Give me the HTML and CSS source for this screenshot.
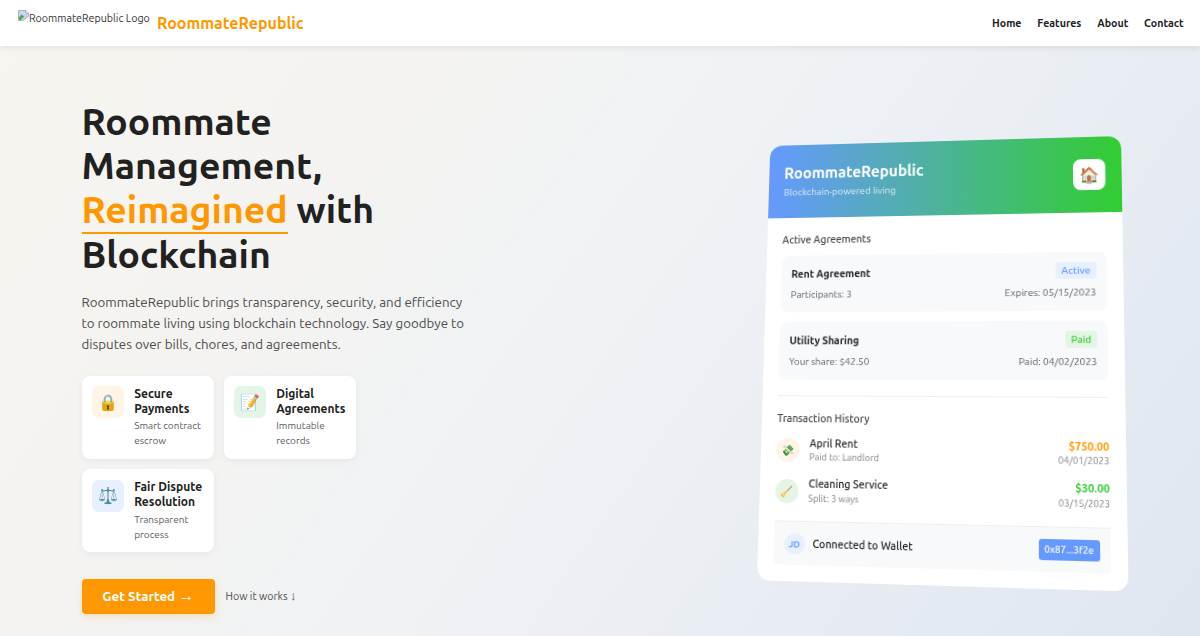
FILE: index.html
```html
<!DOCTYPE html>
<html lang="en">

<head>
    <meta charset="UTF-8">
    <title>RoommateRepublic</title>
    <link rel="stylesheet" href="styles.css">
</head>

<body>

    <header class="navbar">
        <div class="brand">
            <div class="logo">
                <svg class="logo-icon" width="11" height="11" viewBox="0 0 12 12">
                    <path d="M0.5 0.5h8l3 3v3.5l-6.500 4.500h-4.500z" fill="#c6d5f5" stroke="#a3a8ad" />
                    <path d="M1 8l3-3 3 2-4 4H1z" fill="#5aa84f" />
                    <path d="M8.500 0.500v3h3" fill="#fff" stroke="#a3a8ad" />
                </svg>
                <span>RoommateRepublic Logo</span>
            </div>
            <span class="brand-name">RoommateRepublic</span>
        </div>
        <nav class="nav-links">
            <a>Home</a>
            <a>Features</a>
            <a>About</a>
            <a>Contact</a>
        </nav>
    </header>

    <main class="hero">
        <section class="hero-content">
            <h1>Roommate<br>Management,<br><span class="highlight">Reimagined</span> with<br>Blockchain</h1>
            <p class="hero-text">RoommateRepublic brings transparency, security, and efficiency<br>to roommate living using blockchain technology. Say goodbye to<br>disputes over bills, chores, and agreements.</p>

            <div class="features">
                <div class="feature">
                    <div class="feature-icon orange">🔒</div>
                    <div>
                        <h3>Secure<br>Payments</h3>
                        <p>Smart contract<br>escrow</p>
                    </div>
                </div>
                <div class="feature">
                    <div class="feature-icon green">📝</div>
                    <div>
                        <h3>Digital<br>Agreements</h3>
                        <p>Immutable<br>records</p>
                    </div>
                </div>
                <div class="feature">
                    <div class="feature-icon blue">⚖️</div>
                    <div>
                        <h3>Fair Dispute<br>Resolution</h3>
                        <p>Transparent<br>process</p>
                    </div>
                </div>
            </div>

            <div class="cta">
                <a class="btn-primary">Get Started <span class="arrow">→</span></a>
                <a class="btn-secondary">How it works <span class="arrow">↓</span></a>
            </div>
        </section>

        <section class="app-card">
            <div class="app-header">
                <div>
                    <h2>RoommateRepublic</h2>
                    <p>Blockchain-powered living</p>
                </div>
                <div class="app-logo">🏠</div>
            </div>
            <div class="app-body">
                <h4>Active Agreements</h4>
                <div class="agreement">
                    <div class="row">
                        <strong>Rent Agreement</strong>
                        <span class="badge blue">Active</span>
                    </div>
                    <div class="row details">
                        <span>Participants: 3</span>
                        <span>Expires: 05/15/2023</span>
                    </div>
                </div>
                <div class="agreement">
                    <div class="row">
                        <strong>Utility Sharing</strong>
                        <span class="badge green">Paid</span>
                    </div>
                    <div class="row details">
                        <span>Your share: $42.50</span>
                        <span>Paid: 04/02/2023</span>
                    </div>
                </div>

                <div class="transactions">
                    <h4>Transaction History</h4>
                    <div class="transaction">
                        <div class="transaction-icon orange">💸</div>
                        <div class="transaction-info">
                            <strong>April Rent</strong>
                            <span>Paid to: Landlord</span>
                        </div>
                        <div class="transaction-amount">
                            <strong class="text-orange">$750.00</strong>
                            <span>04/01/2023</span>
                        </div>
                    </div>
                    <div class="transaction">
                        <div class="transaction-icon green">🧹</div>
                        <div class="transaction-info">
                            <strong>Cleaning Service</strong>
                            <span>Split: 3 ways</span>
                        </div>
                        <div class="transaction-amount">
                            <strong class="text-green">$30.00</strong>
                            <span>03/15/2023</span>
                        </div>
                    </div>
                </div>

                <div class="wallet">
                    <div class="avatar">JD</div>
                    <span class="wallet-label">Connected to Wallet</span>
                    <span class="wallet-address">0x87...3f2e</span>
                </div>
            </div>
        </section>
    </main>

</body>

</html>
```
FILE: styles.css
```css
* {
    box-sizing: border-box;
    margin: 0;
    padding: 0;
}

body {
    height: 636px;
    overflow: hidden;
    font-family: Ubuntu, "Noto Sans", "Noto Color Emoji", sans-serif;
    color: #212121;
    background: linear-gradient(125deg, #f8f5ef 0%, #f4f3f1 28%, #eff2f5 52%, #dfe6f0 100%);
    white-space: nowrap;
}

.navbar {
    position: relative;
    display: flex;
    justify-content: space-between;
    align-items: center;
    height: 46px;
    padding: 0 16.500px 0 18px;
    background: #fff;
    box-shadow: 0 1px 7px rgba(0, 0, 0, 0.1);
}

.brand {
    display: flex;
    align-items: center;
}

.logo {
    display: flex;
    width: 139px;
    height: 27px;
    font-size: 10.67px;
    line-height: 17px;
    color: #333;
}

.logo-icon {
    flex: none;
}

.brand-name {
    padding-bottom: 1px;
    font-size: 16px;
    font-weight: 700;
    color: #ff9800;
}

.nav-links {
    display: flex;
    gap: 15.800px;
    font-size: 10.67px;
    font-weight: 700;
}

.hero {
    display: flex;
    justify-content: space-between;
    padding: 53px 79.5px 0 81.5px;
}

h1 {
    font-size: 37.33px;
    line-height: 44.2px;
    font-weight: 700;
}

.highlight {
    display: inline-block;
    height: 47px;
    margin-bottom: -3px;
    color: #ff9800;
    border-bottom: 2px solid #ff9800;
}

.hero-text {
    margin-top: 16px;
    font-size: 13.3px;
    line-height: 21.1px;
    color: #4c4c4c;
}

.features {
    display: grid;
    grid-template-columns: 132px 132px;
    gap: 10px;
    margin-top: 20.8px;
}

.feature {
    display: flex;
    gap: 10.2px;
    height: 83.3px;
    padding: 10.5px;
    background: #fff;
    border-radius: 8px;
    box-shadow: 0 2px 7px rgba(0, 0, 0, 0.05);
}

.feature-icon {
    display: flex;
    flex: none;
    align-items: center;
    justify-content: center;
    width: 32px;
    height: 32px;
    border-radius: 7px;
    font-size: 16px;
}

.feature h3 {
    padding-top: 0.7px;
    font-size: 12px;
    line-height: 14.6px;
}

.feature p {
    margin-top: 2px;
    font-size: 10px;
    line-height: 15px;
    color: #5c5c5c;
}

.orange {
    background: #fff4e6;
}

.green {
    background: #e4f5e5;
}

.blue {
    background: #e6f0ff;
}

.cta {
    display: flex;
    align-items: center;
    gap: 10.5px;
    margin-top: 26.5px;
}

.btn-primary {
    width: 133.5px;
    height: 35.5px;
    border-radius: 4px;
    background: #ff9800;
    color: #fff;
    font-size: 13.33px;
    font-weight: 700;
    line-height: 35px;
    text-align: center;
    box-shadow: 0 3px 7px rgba(255, 152, 0, 0.2);
}

.btn-secondary {
    font-size: 10.67px;
    color: #4c4c4c;
}

.arrow {
    font-family: "Liberation Sans", sans-serif;
    font-size: 1.2em;
    font-weight: 400;
    line-height: 1;
}

.app-card {
    width: 362px;
    height: 446px;
    margin-top: 34.5px;
    overflow: hidden;
    background: #fff;
    border-radius: 13px;
    transform: perspective(667px) rotateY(-5deg) rotateX(5deg);
}

.app-header {
    display: flex;
    justify-content: space-between;
    align-items: center;
    height: 78px;
    padding: 0 16px;
    color: #fff;
    background: linear-gradient(90deg, #6699ff, #32cd32);
}

.app-header h2 {
    font-size: 16px;
    line-height: 23px;
}

.app-header p {
    font-size: 10.1px;
    line-height: 18px;
    opacity: 0.8;
}

.app-logo {
    width: 32px;
    height: 32px;
    border-radius: 8px;
    background: #fff;
    font-size: 16px;
    line-height: 32px;
    text-align: center;
}

.app-body {
    padding: 15px 16px;
}

h4 {
    font-size: 10.67px;
    line-height: 16px;
    font-weight: 500;
    color: #444;
}

.agreement {
    height: 59.3px;
    margin-top: 8.5px;
    padding: 10.5px;
    border-radius: 8px;
    background: #f8f9fb;
    font-size: 10.67px;
}

.agreement + .agreement {
    margin-top: 10px;
}

.row {
    display: flex;
    justify-content: space-between;
    align-items: center;
    height: 17px;
}

.details {
    margin-top: 4.5px;
    font-size: 10px;
    color: #5c5c5c;
}

.badge {
    padding: 0 5.300px;
    border-radius: 3px;
    font-size: 10px;
    line-height: 17px;
    font-weight: 500;
}

.badge.blue,
.avatar {
    color: #6699ff;
}

.badge.green,
.text-green {
    color: #32cd32;
}

.text-orange {
    color: #ff9800;
}

.transactions {
    margin-top: 16px;
    padding-top: 14px;
    border-top: 1px solid #eee;
}

.transaction {
    display: flex;
    align-items: center;
    height: 30px;
    margin-top: 9px;
    font-size: 10.67px;
    line-height: 14.5px;
}

.transaction + .transaction {
    margin-top: 10.5px;
}

.transaction-icon {
    width: 24px;
    height: 24px;
    margin-right: 10px;
    border-radius: 50%;
    font-size: 10.67px;
    line-height: 24px;
    text-align: center;
}

.transaction-info strong,
.transaction-info span,
.transaction-amount strong,
.transaction-amount span {
    display: block;
}

.transaction-info strong {
    font-weight: 500;
}

.transaction-info span,
.transaction-amount span {
    font-size: 9.33px;
    color: #808080;
}

.transaction-amount {
    margin-left: auto;
    text-align: right;
}

.wallet {
    display: flex;
    align-items: center;
    height: 43px;
    margin-top: 14.5px;
    padding: 0 10.5px;
    border-top: 1px solid #eee;
    background: #f8f9fb;
}

.avatar {
    width: 21px;
    height: 21px;
    margin-right: 8px;
    border-radius: 50%;
    background: #e6f0ff;
    font-size: 9.33px;
    font-weight: 700;
    line-height: 21px;
    text-align: center;
}

.wallet-label {
    font-size: 10.67px;
    font-weight: 500;
}

.wallet-address {
    margin-left: auto;
    padding: 0 5.300px;
    border-radius: 3px;
    background: #6699ff;
    color: #fff;
    font-size: 9.33px;
    font-weight: 500;
    line-height: 20px;
}
```
